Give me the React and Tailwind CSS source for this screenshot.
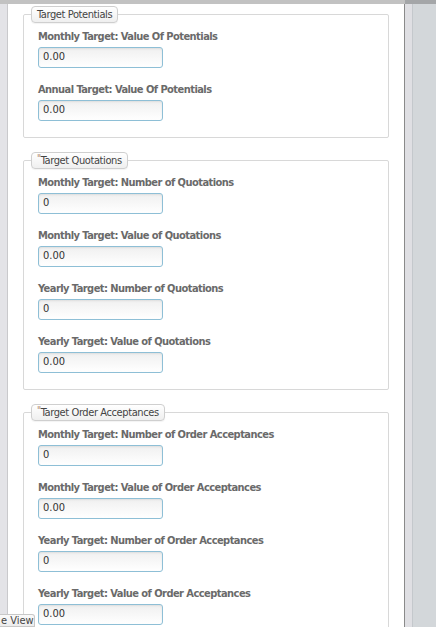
import React from "react";

const sections = [
  {
    title: "Target Potentials",
    req: false,
    fields: [
      ["Monthly Target: Value Of Potentials", "0.00"],
      ["Annual Target: Value Of Potentials", "0.00"],
    ],
  },
  {
    title: "Target Quotations",
    req: true,
    fields: [
      ["Monthly Target: Number of Quotations", "0"],
      ["Monthly Target: Value of Quotations", "0.00"],
      ["Yearly Target: Number of Quotations", "0"],
      ["Yearly Target: Value of Quotations", "0.00"],
    ],
  },
  {
    title: "Target Order Acceptances",
    req: true,
    fields: [
      ["Monthly Target: Number of Order Acceptances", "0"],
      ["Monthly Target: Value of Order Acceptances", "0.00"],
      ["Yearly Target: Number of Order Acceptances", "0"],
      ["Yearly Target: Value of Order Acceptances", "0.00"],
    ],
  },
];

const font = { fontFamily: '"DejaVu Sans Condensed", Tahoma, "Liberation Sans", sans-serif' };

function Section({ s }) {
  return (
    <fieldset className="mt-[14px] first:mt-0 mx-0 border border-[#d8d8d8] rounded-[2px] pl-[14px] pr-[10px] pt-[7px] pb-[16px] min-w-0">
      <legend className="ml-[-7px] h-[17px] px-[5px] border border-[#cfcfcf] rounded-[4px] bg-gradient-to-b from-white to-[#efefef] text-[11px] leading-[15px] tracking-[-0.4px] text-[#444] shadow-[0_1px_1px_rgba(0,0,0,0.05)]">
        {s.req && <span className="text-[10px] leading-[10px] relative top-[-2px] text-[#a8876c]">"</span>}
        {s.title}
      </legend>
      <div className="flex flex-col gap-[15px]">
        {s.fields.map(([label, val]) => (
          <div key={label} className="flex flex-col">
            <div className="text-[11px] leading-[14px] font-bold tracking-[-0.55px] text-[#6a6a6a] whitespace-nowrap">{label}</div>
            <div className="mt-[3px] w-[125px] h-[21px] border border-[#8ebfd6] rounded-[3px] bg-gradient-to-b from-[#f0f0f0] to-white flex items-center pl-[4px] text-[11px] text-[#333] shadow-[inset_0_1px_2px_rgba(0,0,0,0.08)]">
              {val}
            </div>
          </div>
        ))}
      </div>
    </fieldset>
  );
}

export default function App() {
  return (
    <div className="relative w-[436px] h-[627px] overflow-hidden bg-white flex flex-col" style={font}>
      <div className="h-[4px] flex shrink-0">
        <div className="flex-1 bg-[#c2c2c2]" />
        <div className="w-[31px] bg-[#a4a6a8]" />
      </div>
      <div className="flex flex-1 min-h-0">
        <div className="w-[8px] bg-[#e3e3e7] border-r border-[#c9c9cc] shrink-0" />
        <div className="flex-1 pl-[15px] pr-[15px] pt-[2px] overflow-hidden">
          {sections.map((s) => (
            <Section key={s.title} s={s} />
          ))}
        </div>
        <div className="w-[9px] bg-[#dfdfe3] border-l border-[#8a8a8a] border-r border-r-[#c4c8cc] shrink-0" />
        <div className="w-[23px] bg-[#d3d7da] shrink-0" />
      </div>
      <div className="absolute left-0 bottom-0 h-[13px] w-[35px] bg-gradient-to-b from-[#fafafa] to-[#ececec] border border-[#c8c8c8] border-l-0 rounded-tr-[3px] text-[11px] leading-[12px] text-[#444] pl-[1px] overflow-hidden whitespace-nowrap">
        e View
      </div>
    </div>
  );
}
